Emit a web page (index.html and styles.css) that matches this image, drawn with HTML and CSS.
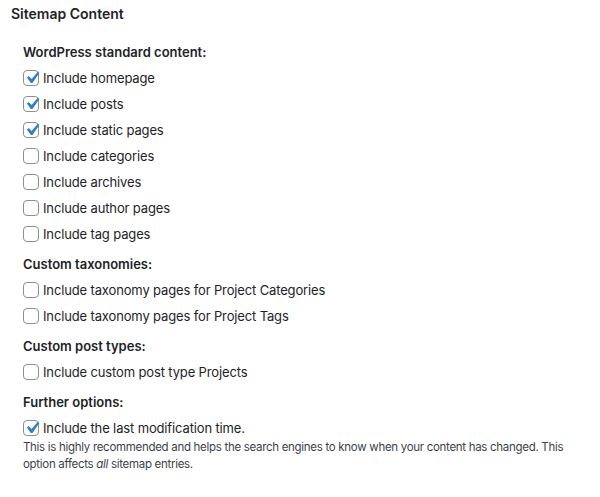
FILE: index.html
```html
<!DOCTYPE html>
<html lang="en">
<head>
<meta charset="utf-8">
<title>Sitemap Content</title>
<link rel="stylesheet" href="styles.css">
</head>
<body>
<div class="panel">
  <h2 class="title">Sitemap Content</h2>
  <div class="groups">
    <div class="group">
      <div class="group-label">WordPress standard content:</div>
      <label class="row"><span class="box checked"><svg viewBox="0 0 20 20"><path d="M14.83 4.89l1.34.94-5.81 8.38H9.02L5.78 9.67l1.34-1.25 2.57 2.4z"/></svg></span><span>Include homepage</span></label>
      <label class="row"><span class="box checked"><svg viewBox="0 0 20 20"><path d="M14.83 4.89l1.34.94-5.81 8.38H9.02L5.78 9.67l1.34-1.25 2.57 2.4z"/></svg></span><span>Include posts</span></label>
      <label class="row"><span class="box checked"><svg viewBox="0 0 20 20"><path d="M14.83 4.89l1.34.94-5.81 8.38H9.02L5.78 9.67l1.34-1.25 2.57 2.4z"/></svg></span><span>Include static pages</span></label>
      <label class="row"><span class="box"></span><span>Include categories</span></label>
      <label class="row"><span class="box"></span><span>Include archives</span></label>
      <label class="row"><span class="box"></span><span>Include author pages</span></label>
      <label class="row"><span class="box"></span><span>Include tag pages</span></label>
    </div>
    <div class="group">
      <div class="group-label">Custom taxonomies:</div>
      <label class="row"><span class="box"></span><span>Include taxonomy pages for Project Categories</span></label>
      <label class="row"><span class="box"></span><span>Include taxonomy pages for Project Tags</span></label>
    </div>
    <div class="group">
      <div class="group-label">Custom post types:</div>
      <label class="row"><span class="box"></span><span>Include custom post type Projects</span></label>
    </div>
    <div class="group">
      <div class="group-label">Further options:</div>
      <label class="row"><span class="box checked"><svg viewBox="0 0 20 20"><path d="M14.83 4.89l1.34.94-5.81 8.38H9.02L5.78 9.67l1.34-1.25 2.57 2.4z"/></svg></span><span>Include the last modification time.</span></label>
      <p class="desc">This is highly recommended and helps the search engines to know when your content has changed. This option affects <em>all</em> sitemap entries.</p>
    </div>
  </div>
</div>
</body>
</html>
```
FILE: styles.css
```css
html, body {
  margin: 0;
  padding: 0;
  background: #ffffff;
}

body {
  font-family: Inter, "Liberation Sans", Arial, sans-serif;
  font-size: 13px;
  color: #1d2327;
}

.panel {
  padding: 0 0 0 11px;
}

.title {
  margin: 0;
  font-size: 14px;
  font-weight: 600;
  line-height: 28px;
}

.groups {
  display: flex;
  flex-direction: column;
  gap: 4px;
  margin-top: 11px;
  padding-left: 12px;
}

.group {
  display: flex;
  flex-direction: column;
}

.group-label {
  height: 26px;
  line-height: 26px;
  font-weight: 600;
}

.row {
  height: 26px;
  display: flex;
  align-items: center;
  gap: 4px;
  letter-spacing: -0.14px;
}

.box {
  box-sizing: border-box;
  width: 16px;
  height: 16px;
  border: 1px solid #8c8f94;
  border-radius: 4px;
  background: #fff;
  display: flex;
  align-items: center;
  justify-content: center;
  flex: none;
}

.box svg {
  width: 24px;
  height: 24px;
  flex: none;
  fill: #2f7fc7;
  margin-left: 1px;
}

.desc {
  margin: -2px 0 0 0;
  font-size: 11.5px;
  line-height: 17px;
  color: #3c434a;
  max-width: 555px;
  letter-spacing: -0.3px;
}
```
